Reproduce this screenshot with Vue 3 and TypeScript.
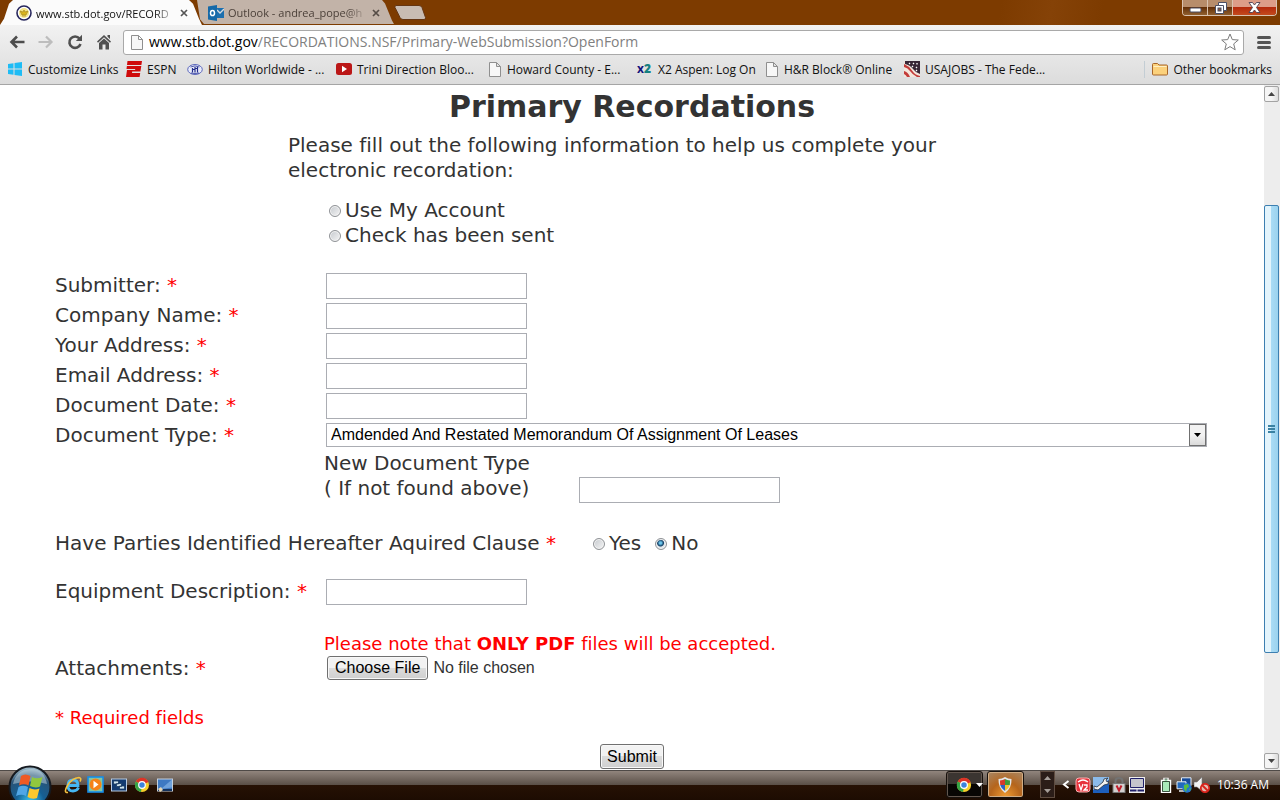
<script setup lang="ts">
import { ref, reactive } from 'vue'

interface Bookmark {
  label: string
  icon: 'windows' | 'espn' | 'hilton' | 'video' | 'page' | 'x2' | 'jobs'
}

interface Field {
  id: string
  label: string
}

const bookmarks: Bookmark[] = [
  { label: 'Customize Links', icon: 'windows' },
  { label: 'ESPN', icon: 'espn' },
  { label: 'Hilton Worldwide - ...', icon: 'hilton' },
  { label: 'Trini Direction Bloo...', icon: 'video' },
  { label: 'Howard County - E...', icon: 'page' },
  { label: 'X2 Aspen: Log On', icon: 'x2' },
  { label: 'H&R Block® Online', icon: 'page' },
  { label: 'USAJOBS - The Fede...', icon: 'jobs' },
]

const fields: Field[] = [
  { id: 'submitter', label: 'Submitter:' },
  { id: 'company', label: 'Company Name:' },
  { id: 'address', label: 'Your Address:' },
  { id: 'email', label: 'Email Address:' },
  { id: 'date', label: 'Document Date:' },
]

const values = reactive<Record<string, string>>({
  submitter: '',
  company: '',
  address: '',
  email: '',
  date: '',
  newType: '',
  equipment: '',
})
const payment = ref('')
const clause = ref('No')
const documentType = ref('Amdended And Restated Memorandum Of Assignment Of Leases')
</script>

<template>
  <div class="window">
    <header class="browser">
      <div class="tabstrip">
        <div class="tab active">
          <svg class="i16" viewBox="0 0 16 16">
            <circle cx="8" cy="8" r="7" fill="#fff" stroke="#26265c" stroke-width="1.6" />
            <circle cx="8" cy="8" r="5" fill="#f4e58a" />
            <path d="M4 6l3 1 1-2 1 2 3-1-2 4H6zM6 11h4" fill="#d9b51f" stroke="#a98a1c" stroke-width=".7" />
          </svg>
          <span class="tab-title">www.stb.dot.gov/RECORD</span>
          <button class="close" aria-label="Close tab">
            <svg viewBox="0 0 8 8"><path d="M1 1l6 6M7 1L1 7" stroke="#555" stroke-width="1.7" /></svg>
          </button>
        </div>
        <div class="tab idle">
          <svg class="i16" viewBox="0 0 16 16">
            <path d="M9 3h7v10H9z" fill="#1c6fae" />
            <path d="M9 5l3 3 4-4" fill="none" stroke="#d5dbe0" stroke-width="1.3" />
            <path d="M0 1.500l9-1.500v16l-9-1.500z" fill="#1569a8" />
            <ellipse cx="4.500" cy="8" rx="2" ry="2.600" fill="none" stroke="#fff" stroke-width="1.500" />
          </svg>
          <span class="tab-title">Outlook - andrea_pope@h</span>
          <button class="close" aria-label="Close tab">
            <svg viewBox="0 0 8 8"><path d="M1 1l6 6M7 1L1 7" stroke="#554c46" stroke-width="1.7" /></svg>
          </button>
        </div>
        <button class="new-tab" aria-label="New tab">
          <svg viewBox="0 0 32 15"><path d="M2 .5h23q2 0 3 2l3.500 10q.5 2-1.500 2H9q-2 0-3-2L1 2.500Q.5.500 2 .5z" fill="#c8bcb3" stroke="#653613" /></svg>
        </button>
        <div class="controls">
          <button class="wc min" aria-label="Minimize">
            <svg viewBox="0 0 13 6"><rect x="1" y="1" width="11" height="4" rx="1" fill="#fff" stroke="#4b4f64" /></svg>
          </button>
          <button class="wc max" aria-label="Restore">
            <svg viewBox="0 0 13 12">
              <path d="M4.500.5h8v8h-3v3h-8v-8h3z" fill="#fff" stroke="#4b4f64" />
              <path d="M4.500 3.500h5v5" fill="none" stroke="#4b4f64" />
              <rect x="4" y="6" width="3" height="3" fill="#8a5a3a" stroke="#4b4f64" />
            </svg>
          </button>
          <button class="wc shut" aria-label="Close">
            <svg viewBox="0 0 13 11">
              <path d="M1 .5h3.500l2 2.500 2-2.500H12L8.500 5.500l3.500 5H8.500l-2-2.500-2 2.500H1l3.500-5z" fill="#fff" stroke="#4b3f54" stroke-width=".9" />
            </svg>
          </button>
        </div>
      </div>

      <div class="toolbar">
        <button class="nav" aria-label="Back">
          <svg viewBox="0 0 16 14"><path d="M15.500 7H3M8 1.500L2.500 7 8 12.500" fill="none" stroke="#4d4d4d" stroke-width="2.600" /></svg>
        </button>
        <button class="nav" aria-label="Forward">
          <svg viewBox="0 0 16 14"><path d="M.5 7H13M8 1.500L13.500 7 8 12.500" fill="none" stroke="#bdbdbd" stroke-width="2.200" /></svg>
        </button>
        <button class="nav" aria-label="Reload">
          <svg viewBox="0 0 16 16">
            <path d="M12.500 4.500A5.700 5.700 0 1 0 13.500 10" fill="none" stroke="#505050" stroke-width="2.600" />
            <path d="M15 .8V7H8.800z" fill="#505050" />
          </svg>
        </button>
        <button class="nav" aria-label="Home">
          <svg viewBox="0 0 16 16">
            <path d="M8 1l7 6.500-1 1.200L8 3.300 2 8.700 1 7.500zM11.500 1H14v4l-2.500-2.300z" fill="#505050" />
            <path d="M3 9l5-4.500L13 9v6.500h-3.500v-5h-3v5H3z" fill="#505050" />
          </svg>
        </button>
        <div class="omnibox">
          <svg class="page" viewBox="0 0 12 15"><path d="M.5.500h7l4 4v10H.5zM7.500.500v4h4" fill="#f7f7f7" stroke="#8f8f8f" /></svg>
          <span class="url">www.stb.dot.gov<i>/RECORDATIONS.NSF/Primary-WebSubmission?OpenForm</i></span>
          <button class="star" aria-label="Bookmark this page">
            <svg viewBox="0 0 18 18">
              <path d="M9 1l2.300 5.600 6 .4-4.600 3.900 1.500 5.900L9 13.600l-5.200 3.200 1.500-5.900L.7 7l6-.4z" fill="#fff" stroke="#7c7c7c" stroke-linejoin="round" />
            </svg>
          </button>
        </div>
        <button class="menu" aria-label="Menu">
          <svg viewBox="0 0 14 13"><path d="M1.500 1.500h11M1.500 6.500h11M1.500 11.500h11" stroke="#555" stroke-width="3" stroke-linecap="round" /></svg>
        </button>
      </div>

      <nav class="bookmarks">
        <a v-for="b in bookmarks" :key="b.label" class="bookmark" href="#">
          <svg v-if="b.icon === 'windows'" class="i16" viewBox="0 0 16 16">
            <path d="M1 3l5.500-.8v5.300H1zM7.500 2L15 1v6.500H7.500zM1 8.500h5.500v5.300L1 13zM7.500 8.500H15V15l-7.500-1z" fill="#1ebcf5" />
          </svg>
          <svg v-else-if="b.icon === 'espn'" class="i16" viewBox="0 0 16 16">
            <path d="M1.500 0H16l-.6 4H1zM.9 5h14.400l-.9 5.500H6.200L6 12h8.200l-.6 4H0l1-7h8l.3-1H.5z" fill="#cf0a0a" />
          </svg>
          <svg v-else-if="b.icon === 'hilton'" class="i16" viewBox="0 0 16 16">
            <ellipse cx="8" cy="8.500" rx="7.300" ry="5" fill="#e9ecfa" stroke="#4b57b5" stroke-width=".9" />
            <path d="M3.500 6Q8 3.800 12.500 6M4 12q4 1 8 0" fill="none" stroke="#2b3699" stroke-width=".8" />
            <path d="M5.500 7v4.500M8 6v5.500M10.500 6v5.500M5.500 8.500H8M8 7.500h3" stroke="#222c8c" stroke-width="1.200" />
          </svg>
          <svg v-else-if="b.icon === 'video'" class="i16" viewBox="0 0 16 16">
            <rect y="2" width="16" height="12" rx="2.500" fill="#bb1717" />
            <path d="M6 4.800l5 3.200-5 3.200z" fill="#fff" />
          </svg>
          <svg v-else-if="b.icon === 'page'" class="page" viewBox="0 0 12 15">
            <path d="M.5.500h7l4 4v10H.5zM7.500.500v4h4" fill="#f7f7f7" stroke="#8f8f8f" />
          </svg>
          <span v-else-if="b.icon === 'x2'" class="x2">x<b>2</b></span>
          <svg v-else class="i16" viewBox="0 0 16 16">
            <path d="M0 0h16v16H0z" fill="#f4e6dc" />
            <path d="M1 0h15v13q-4-1-7-5T1 3z" fill="#382636" />
            <path d="M0 3q5 2 8 6.500T16 15v1h-3Q8 13 6 10T0 6z" fill="#c33b39" />
            <path d="M0 10q4 1 6 6H3q-1-2-3-3z" fill="#c33b39" />
            <path d="M5 2l1 1M9 2l1 1M13 2v1.500M8 5l1 1M12 6l1 1M12 9l1 1" stroke="#fff" stroke-width="1.300" />
          </svg>
          <span>{{ b.label }}</span>
        </a>
        <a class="bookmark other" href="#">
          <svg class="i16" viewBox="0 0 16 16">
            <path d="M.5 13V3.500q0-1 1-1h4l1.500 1.500h7.500q1 0 1 1V13q0 1-1 1h-13q-1 0-1-1z" fill="#fbd17c" stroke="#a8662a" />
            <path d="M1.500 5.500h13" stroke="#fff0c4" />
          </svg>
          <span>Other bookmarks</span>
        </a>
      </nav>
    </header>

    <div class="viewport">
      <main class="page-body">
        <h1>Primary Recordations</h1>
        <form @submit.prevent>
          <section class="intro">
            <p>Please fill out the following information to help us complete your electronic recordation:</p>
            <div class="payment">
              <label><input v-model="payment" type="radio" name="payment" value="account" />Use My Account</label>
              <label><input v-model="payment" type="radio" name="payment" value="check" />Check has been sent</label>
            </div>
          </section>

          <div class="fields">
            <template v-for="f in fields" :key="f.id">
              <label :for="f.id">{{ f.label }} <em>*</em></label>
              <input :id="f.id" v-model="values[f.id]" class="box" type="text" />
            </template>
            <label for="type">Document Type: <em>*</em></label>
            <div class="select">
              <select id="type" v-model="documentType">
                <option>Amdended And Restated Memorandum Of Assignment Of Leases</option>
              </select>
              <span class="drop"><svg viewBox="0 0 7 4"><path d="M0 0h7L3.500 4z" fill="#000" /></svg></span>
            </div>
          </div>

          <div class="new-type">
            <label for="newType">New Document Type<br />( If not found above)</label>
            <input id="newType" v-model="values.newType" class="box" type="text" />
          </div>

          <div class="clause" role="radiogroup" aria-labelledby="clause-label">
            <span id="clause-label">Have Parties Identified Hereafter Aquired Clause <em>*</em></span>
            <div class="answers">
              <label><input v-model="clause" type="radio" name="clause" value="Yes" />Yes</label>
              <label><input v-model="clause" type="radio" name="clause" value="No" />No</label>
            </div>
          </div>

          <div class="fields equipment">
            <label for="equipment">Equipment Description: <em>*</em></label>
            <input id="equipment" v-model="values.equipment" class="box" type="text" />
          </div>

          <p class="note">Please note that <strong>ONLY PDF</strong> files will be accepted.</p>
          <div class="fields attach">
            <label for="file">Attachments: <em>*</em></label>
            <input id="file" type="file" accept="application/pdf" />
          </div>
          <p class="required">* Required fields</p>
          <button class="submit" type="submit">Submit</button>
        </form>
      </main>
      <div class="scrollbar">
        <button class="arrow" aria-label="Scroll up"><svg viewBox="0 0 7 4"><path d="M0 4h7L3.500 0z" fill="#444" /></svg></button>
        <div class="track">
          <div class="thumb"><i></i><i></i><i></i></div>
        </div>
        <button class="arrow" aria-label="Scroll down"><svg viewBox="0 0 7 4"><path d="M0 0h7L3.500 4z" fill="#444" /></svg></button>
      </div>
    </div>

    <footer class="taskbar">
      <button class="start" aria-label="Start">
        <svg viewBox="0 0 44 44">
          <defs>
            <radialGradient id="orb" cx=".5" cy=".85" r=".85">
              <stop offset="0" stop-color="#3bc4ee" />
              <stop offset=".4" stop-color="#155f94" />
              <stop offset=".75" stop-color="#2a5376" />
              <stop offset="1" stop-color="#b5cfda" />
            </radialGradient>
          </defs>
          <circle cx="22" cy="22" r="20.500" fill="url(#orb)" stroke="#161a20" stroke-width="2" />
          <path d="M5 19Q8 5 22 4t17 15q-16-5-34 0z" fill="#d5e6ee" opacity=".45" />
          <path d="M13 11q4-3 9.500 0l-2 9.500q-4.500-2.500-9.500 0z" fill="#ee5a24" />
          <path d="M24 12q4.500 2.500 10.500 0l-2.500 9.500q-4.500 2-10-.5z" fill="#91c83e" />
          <path d="M10.500 22q4.500-2.500 9.500 0l-2 9q-4.500-2.500-10 0z" fill="#51a6e6" />
          <path d="M21.500 23q4.500 2.500 10 .5l-2.500 9.500q-4.500 2-9.500-1z" fill="#fdc82f" />
        </svg>
      </button>
      <div class="quick">
        <svg class="i18" viewBox="0 0 18 18">
          <path d="M14.500 11.500q-1.500 3.500-5.500 3.500-5 0-5-5.500T9 4t5 5.500H5" fill="none" stroke="#46b7f3" stroke-width="2.800" />
          <path d="M4 16.500Q-1 17 3.500 9.500T15 1.500q3 .5 1 4" fill="none" stroke="#f3c140" stroke-width="1.600" />
        </svg>
        <svg class="i18" viewBox="0 0 18 18">
          <rect x="1" y="1" width="15" height="15" fill="#86c5a0" stroke="#168ee9" stroke-width="1.600" />
          <circle cx="8.500" cy="8.500" r="6" fill="#f58218" />
          <path d="M6.500 4.800l5 3.700-5 3.700z" fill="#fff" />
        </svg>
        <svg class="i18" viewBox="0 0 18 18">
          <rect x="1.500" y="3" width="15" height="12" fill="#123a70" stroke="#b8cbe2" />
          <path d="M3.500 5h5v3h-5zM6.500 7.500h5v3h-5zM9.500 10h5v3h-5z" fill="#cfe4ee" stroke="#17385f" stroke-width=".8" />
        </svg>
        <svg class="i18" viewBox="0 0 18 18">
          <circle cx="9" cy="9" r="7" fill="#f7cf2a" />
          <path d="M9 9L2.900 5.500A7 7 0 0 1 15.500 6z" fill="#dd3327" />
          <path d="M9 9L2.900 5.500A7 7 0 0 0 8 16z" fill="#35a447" />
          <circle cx="9" cy="9" r="3.300" fill="#3c83dc" stroke="#fff" stroke-width="1.200" />
        </svg>
        <svg class="i18" viewBox="0 0 18 18">
          <rect x="1.500" y="3" width="15" height="12" fill="#3e79c2" stroke="#c5d0dc" />
          <path d="M2 13h14v2H2z" fill="#14325d" />
          <path d="M16 3.500v8L5 13z" fill="#6fa2dc" />
          <path d="M2 13l3-2 2 3-3 2z" fill="#e6d7b5" />
        </svg>
      </div>
      <div class="tasks">
        <button class="task dark" aria-label="Chrome">
          <svg class="i16" viewBox="0 0 18 18">
            <circle cx="9" cy="9" r="8" fill="#f7cf2a" />
            <path d="M9 9L2 5A8 8 0 0 1 16.500 6z" fill="#dd3327" />
            <path d="M9 9L2 5A8 8 0 0 0 8 17z" fill="#35a447" />
            <circle cx="9" cy="9" r="3.800" fill="#3c83dc" stroke="#fff" stroke-width="1.400" />
          </svg>
          <svg class="caret" viewBox="0 0 7 4"><path d="M0 0h7L3.500 4z" fill="#fff" /></svg>
        </button>
        <button class="task gold" aria-label="Security">
          <svg class="i16" viewBox="0 0 16 16">
            <path d="M8 0q3 2 6.500 2Q15 11 8 16 1 11 1.500 2 5 2 8 0z" fill="#e3e6e8" />
            <path d="M8 2v6H3.200Q3 6 3 3.500 6 3.300 8 2z" fill="#d73a2b" />
            <path d="M8 2v6h4.800q.2-2 .2-4.500Q10 3.300 8 2z" fill="#3f9b3c" />
            <path d="M8 8v6Q4 11.500 3.200 8z" fill="#2c62c4" />
            <path d="M8 8v6q4-2.500 4.800-6z" fill="#f5c52c" />
          </svg>
        </button>
      </div>
      <div class="spin">
        <svg viewBox="0 0 7 4"><path d="M0 4h7L3.500 0z" fill="#a69e99" /></svg>
        <svg viewBox="0 0 7 4"><path d="M0 0h7L3.500 4z" fill="#a69e99" /></svg>
      </div>
      <svg class="chevron" viewBox="0 0 8 9"><path d="M6.500 1L2 4.500 6.500 8" fill="none" stroke="#fff" stroke-width="2" /></svg>
      <div class="tray">
        <svg class="i16" viewBox="0 0 16 16">
          <rect x="1" y="1" width="14" height="14" rx="3" fill="#e7323b" stroke="#f7b0b0" />
          <path d="M3 5q5-4 10 0M5 4q3-2 6 0M4 7l2 6 2-6M9 8h3v2l-3 3h4" fill="none" stroke="#fff" stroke-width="1.300" />
        </svg>
        <svg class="i16" viewBox="0 0 16 16">
          <path d="M0 0h16v16H0z" fill="#1d5fbd" />
          <path d="M0 0h16v3L0 13z" fill="#8bbbea" />
          <path d="M1 9l3 1 6-5 1-3 4-1-2 2 1 2 2-1-1 3-4 1-6 5-4-1z" fill="#f2f2f0" stroke="#26303f" stroke-width=".8" />
        </svg>
        <svg class="i16" viewBox="0 0 16 16">
          <path d="M4.500 8V4q0-3 3.500-3t3.500 3v4" fill="none" stroke="#727272" stroke-width="2" />
          <rect x="2" y="6.500" width="12" height="9" fill="#d3d0ce" stroke="#777" />
          <path d="M5.500 8.500L8 13.500l2.500-5" fill="none" stroke="#c11e2c" stroke-width="2" />
        </svg>
        <svg class="i16" viewBox="0 0 16 16">
          <path d="M0 0h16v16H0z" fill="#eee" />
          <path d="M1.500 1.500h13v9h-13z" fill="#c4c4cc" stroke="#20206a" />
          <path d="M1 12.500h6.500v2H1zM8.500 12.500H15v2H8.500z" fill="#20206a" />
        </svg>
        <svg class="i16 battery" viewBox="0 0 16 16">
          <path d="M6 1.500h4v2h2.500v12h-9v-12H6z" fill="#a9eab9" stroke="#fff" stroke-width="1.400" />
          <path d="M6.500 2h3M4.500 4.500h7v10h-7z" fill="none" stroke="#1b2c1d" stroke-width=".8" />
        </svg>
        <svg class="i16" viewBox="0 0 16 16">
          <path d="M5.500.8H15v8H5.500z" fill="#174b9a" stroke="#e8eef2" />
          <path d="M1 4.800h9v7H1z" fill="#2368bd" stroke="#e8eef2" />
          <path d="M3 14h6" stroke="#e8eef2" stroke-width="1.500" />
          <circle cx="11" cy="11" r="4.700" fill="#2277cf" />
          <path d="M8 8l4-1 1 3-2 1-1 4-2-3zM13 12l2-1-1 3z" fill="#59bd3f" />
        </svg>
        <svg class="i16" viewBox="0 0 16 16">
          <path d="M0 5h3l5-5v14L3 10H0z" fill="#f2f2f2" stroke="#777" stroke-width=".6" />
          <circle cx="11" cy="11" r="4.200" fill="#e5b9b0" stroke="#d8221b" stroke-width="1.800" />
          <path d="M8 8l6 6" stroke="#d8221b" stroke-width="1.800" />
        </svg>
      </div>
      <time class="clock">10:36 AM</time>
    </footer>
  </div>
</template>

<style>
html,
body {
  margin: 0;
  background: #fff;
}
</style>

<style scoped>
* {
  box-sizing: border-box;
}
.window {
  display: flex;
  flex-direction: column;
  height: 100vh;
  overflow: hidden;
  font-family: "Open Sans", "Noto Sans", sans-serif;
  font-size: 12px;
  color: #111;
}
button {
  padding: 0;
  border: 0;
  background: none;
  font: inherit;
  color: inherit;
}
svg {
  display: block;
  flex: none;
}
.i16 {
  width: 16px;
  height: 16px;
}
.i18 {
  width: 18px;
  height: 18px;
}
.page {
  width: 12px;
  height: 15px;
}

/* Browser frame */
.browser {
  flex: none;
  background: linear-gradient(#fbfbfb, #dcdcdc);
  border-bottom: 1px solid #a5a5a5;
}
.tabstrip {
  display: flex;
  align-items: flex-start;
  height: 25px;
  background: linear-gradient(100deg, #7d3b00 0 78%, #854207 82%, #7d3b00 86%);
}
.tab {
  display: flex;
  align-items: center;
  gap: 4px;
  width: 202px;
  height: 25px;
  padding: 1px 14px 0 16px;
}
.active {
  position: relative;
  background: #fbfbfb;
  clip-path: polygon(0 100%, 4px 75%, 9px 15%, 13px 0, 189px 0, 193px 15%, 199px 75%, 100% 100%);
}
.idle {
  height: 24px;
  width: 200px;
  margin-left: -8px;
  padding-left: 14px;
  background: #c2b3a8;
  color: #4b4039;
  clip-path: polygon(3px 0, 188px 0, 191px 15%, 198px 85%, 100% 100%, 10px 100%, 6px 80%);
}
.tab-title {
  flex: 1;
  font-size: 11px;
  white-space: nowrap;
  mask-image: linear-gradient(90deg, #000 85%, transparent);
}
.close {
  width: 8px;
  height: 8px;
}
.new-tab {
  width: 32px;
  height: 15px;
  margin-top: 5px;
}
.controls {
  display: flex;
  height: 16px;
  margin: 0 3px 0 auto;
  border: 1px solid #d9c3b0;
  border-top: 0;
  border-radius: 0 0 4px 4px;
  overflow: hidden;
}
.wc {
  display: flex;
  align-items: center;
  justify-content: center;
  width: 25px;
  background: linear-gradient(#b78d6b 50%, #643008 50%, #91602f);
  border-right: 1px solid #d9c3b0;
}
.wc svg {
  width: 13px;
}
.min svg {
  margin-top: 4px;
}
.shut {
  width: 43px;
  border-right: 0;
  background: linear-gradient(#dd9d88 45%, #b52b0c 50%, #c44a1d);
}
.toolbar {
  display: flex;
  align-items: center;
  height: 33px;
  padding: 1px 9px 0;
  gap: 13px;
}
.nav,
.nav svg {
  width: 16px;
  height: 16px;
}
.omnibox {
  display: flex;
  align-items: center;
  flex: 1;
  height: 25px;
  padding: 0 4px 0 7px;
  margin-left: -2px;
  background: #fff;
  border: 1px solid #a9a9a9;
  border-radius: 3px;
}
.url {
  flex: 1;
  margin-left: 6px;
  font-size: 14px;
  line-height: 20px;
  color: #000;
}
.url i {
  font-style: normal;
  color: #808080;
}
.star,
.star svg {
  width: 18px;
  height: 18px;
}
.menu {
  width: 14px;
}
.bookmarks {
  display: grid;
  grid-template-columns: 119px 61px 149px 153px 148px 129px 138px 1fr auto;
  align-items: center;
  height: 26px;
  padding: 0 8px 4px 7px;
}
.bookmark {
  display: flex;
  align-items: center;
  gap: 5px;
  color: #111;
  text-decoration: none;
  white-space: nowrap;
}
.bookmark .page {
  margin: 0 1px 0 0;
}
.x2 {
  width: 16px;
  font: bold 12px/16px "Open Sans", sans-serif;
  color: #12127c;
}
.x2 b {
  color: #158080;
}
.other {
  padding-left: 7px;
  border-left: 1px solid #c3cdd4;
}

/* Web page */
.viewport {
  display: flex;
  flex: 1;
  min-height: 0;
}
.page-body {
  flex: 1;
  min-width: 0;
  overflow: hidden;
  padding: 4px 55px 0;
  background: #fff;
  color: #333;
  font-family: "DejaVu Sans", Verdana, sans-serif;
  font-size: 20px;
  line-height: 25px;
  font-variant-ligatures: none;
}
h1 {
  margin: 0 0 8px;
  font-size: 30px;
  line-height: 36px;
  text-align: center;
}
p {
  margin: 0;
}
em {
  font-style: normal;
  color: #f00;
}
.intro {
  max-width: 688px;
  margin: 0 auto 25px;
}
.payment {
  display: flex;
  flex-direction: column;
  padding: 15px 0 0 41px;
}
.payment label,
.answers label {
  display: flex;
  align-items: center;
  gap: 4px;
}
input[type="radio"] {
  appearance: none;
  flex: none;
  width: 12px;
  height: 12px;
  margin: 1px 0 0;
  border: 1px solid #8f9296;
  border-radius: 50%;
  background: linear-gradient(135deg, #c5c9ce, #f5f5f5);
  box-shadow: inset 0 0 0 1px #f4f4f4;
}
input[type="radio"]:checked {
  background: radial-gradient(circle at 45% 40%, #6cc6ec 0 1px, #123f66 3px, #dfe5ea 4px);
}
.fields {
  display: grid;
  grid-template-columns: 271px minmax(0, 1fr);
  row-gap: 4px;
  align-items: start;
  margin-right: 2px;
}
.fields label {
  line-height: 24px;
  padding-bottom: 2px;
  white-space: nowrap;
}
.box {
  width: 201px;
  height: 26px;
  padding: 1px 4px;
  border: 1px solid #abadb3;
  background: #fff;
  font: 16px "Liberation Sans", Arial, sans-serif;
}
.select {
  display: flex;
  height: 24px;
  border: 1px solid #abadb3;
}
select {
  appearance: none;
  flex: 1;
  min-width: 0;
  padding: 0 4px 2px;
  border: 0;
  background: #fff;
  color: #000;
  font: 16px "Liberation Sans", Arial, sans-serif;
}
.drop {
  display: flex;
  align-items: center;
  justify-content: center;
  width: 17px;
  border: 1px solid #707070;
  background: linear-gradient(#f2f2f2 50%, #dadada);
}
.drop svg {
  width: 7px;
}
.new-type {
  display: grid;
  grid-template-columns: 255px 201px;
  align-items: end;
  padding: 2px 0 0 269px;
}
.new-type label {
  padding-bottom: 2px;
  white-space: nowrap;
}
.clause {
  display: grid;
  grid-template-columns: 538px auto;
  margin-top: 27px;
  line-height: 26px;
}
.answers {
  display: flex;
  gap: 14px;
}
.equipment {
  margin-top: 23px;
}
.note {
  margin: 27px 0 0 269px;
}
.note,
.required {
  color: #f00;
  font-size: 18px;
  line-height: 24px;
}
.attach {
  margin-bottom: 24px;
}
input[type="file"] {
  height: 24px;
  margin-left: 1px;
  font: 16px/22px "Liberation Sans", Arial, sans-serif;
}
input[type="file"]::file-selector-button,
.submit {
  height: 24px;
  padding: 0 6px;
  border: 1px solid #707070;
  border-radius: 3px;
  background: linear-gradient(#f2f2f2 50%, #dcdcdc 50%, #cfcfcf);
  box-shadow: inset 0 0 0 1px #f8f8f8;
  color: #000;
  font: 16px/22px "Liberation Sans", Arial, sans-serif;
}
input[type="file"]::file-selector-button {
  padding: 0 7px;
  margin-right: 5px;
}
.submit {
  display: block;
  height: 25px;
  margin: 14px auto 0;
}
.scrollbar {
  display: flex;
  flex-direction: column;
  width: 16px;
  padding: 1px 0;
  background: #ededed;
}
.arrow {
  display: flex;
  align-items: center;
  justify-content: center;
  width: 15px;
  height: 16px;
  border: 1px solid #a3a3a3;
  border-radius: 2px;
  background: linear-gradient(90deg, #f5f5f5 50%, #dcdcdc);
}
.arrow svg {
  width: 7px;
}
.track {
  display: grid;
  grid-template-rows: 103fr 448fr 100fr;
  flex: 1;
}
.thumb {
  display: flex;
  flex-direction: column;
  align-items: center;
  justify-content: center;
  gap: 1px;
  grid-row: 2;
  width: 15px;
  border: 1px solid #3c7fb1;
  border-radius: 2px;
  background: linear-gradient(90deg, #e3f4fc 45%, #a9dbf5 50%, #9bd2ee);
}
.thumb i {
  width: 7px;
  height: 2px;
  background: #3b82a3;
}

/* Desktop taskbar */
.taskbar {
  display: flex;
  flex: none;
  align-items: center;
  height: 30px;
  padding: 0 11px 2px 0;
  border-top: 1px solid #4f4a47;
  background: linear-gradient(#91857d, #5b5048 47%, #261104 50%, #1d0c02);
  color: #fff;
}
.start {
  position: relative;
  width: 62px;
  height: 27px;
}
.start svg {
  position: absolute;
  left: 8px;
  top: -6px;
  width: 44px;
  height: 44px;
}
.quick {
  display: flex;
  gap: 5px;
  padding-left: 2px;
}
.tasks {
  display: flex;
  gap: 4px;
  margin-left: auto;
}
.task {
  display: flex;
  align-items: center;
  gap: 4px;
  width: 37px;
  height: 27px;
  padding-left: 9px;
  border: 1px solid #17110d;
  border-radius: 3px;
  box-shadow: inset 0 0 0 1px #62564e;
}
.dark {
  background: linear-gradient(#3b3531 47%, #080604 50%);
}
.gold {
  background: radial-gradient(circle at 50% 100%, #ef9b33, #b5651c 50%, #a88867);
  box-shadow: inset 0 0 0 1px #d2ad84;
}
.caret {
  width: 7px;
}
.spin {
  display: flex;
  flex-direction: column;
  align-items: center;
  justify-content: space-around;
  width: 15px;
  height: 27px;
  margin-left: 16px;
  border: 1px solid #5f4c40;
  background: #2b1d18;
}
.spin svg {
  width: 7px;
}
.chevron {
  width: 8px;
  margin: 0 5px 0 7px;
}
.tray {
  display: flex;
  gap: 2px;
}
.battery {
  margin-left: 11px;
}
.clock {
  margin-left: 7px;
  white-space: nowrap;
}
</style>
